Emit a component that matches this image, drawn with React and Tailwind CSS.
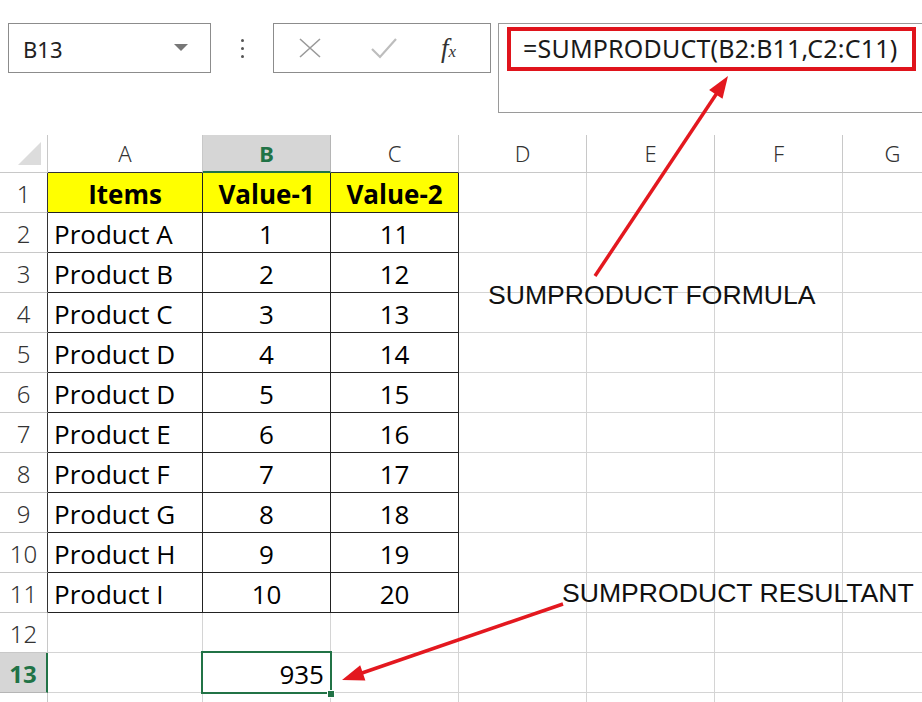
import React from "react";

const COLS = [
  { k: "A", w: 155 },
  { k: "B", w: 128 },
  { k: "C", w: 128 },
  { k: "D", w: 128 },
  { k: "E", w: 128 },
  { k: "F", w: 128 },
  { k: "G", w: 100 },
];

const ROWS = [
  ["Items", "Value-1", "Value-2"],
  ["Product A", "1", "11"],
  ["Product B", "2", "12"],
  ["Product C", "3", "13"],
  ["Product D", "4", "14"],
  ["Product D", "5", "15"],
  ["Product E", "6", "16"],
  ["Product F", "7", "17"],
  ["Product G", "8", "18"],
  ["Product H", "9", "19"],
  ["Product I", "10", "20"],
];

const cellFont = { fontFamily: "'Open Sans', Lato, sans-serif" };
const uiFont = { fontFamily: "'Noto Sans', 'Open Sans', sans-serif" };

function HeaderRow() {
  return (
    <div className="flex h-[38px]">
      <div className="w-[48px] shrink-0 border-r border-b border-[#c8c8c8] flex items-end justify-end pr-[6px] pb-[7px]">
        <svg width="23" height="23" viewBox="0 0 23 23">
          <polygon points="23,0 23,23 0,23" fill="#dcdcdc" />
        </svg>
      </div>
      {COLS.map((c, i) => {
        const sel = c.k === "B";
        const tableCol = i < 3;
        return (
          <div
            key={c.k}
            style={{ width: c.w, ...uiFont }}
            className={
              "shrink-0 border-r flex items-center justify-center text-[22px] font-light " +
              (sel
                ? "bg-[#d6d6d6] border-[#b5b5b5] border-b-2 border-b-[#217346] text-[#217346] !font-bold"
                : tableCol
                ? "border-[#c8c8c8] border-b border-b-[#333] text-[#333]"
                : "border-[#c8c8c8] border-b text-[#333]")
            }
          >
            {c.k}
          </div>
        );
      })}
    </div>
  );
}

function RowHead({ n, sel, dark }) {
  return (
    <div
      style={uiFont}
      className={
        "w-[48px] shrink-0 border-b flex items-center justify-center text-[24px] pt-[2px] " +
        (sel
          ? "bg-[#d6d6d6] border-[#b5b5b5] border-r-2 border-r-[#217346] text-[#217346] font-bold"
          : dark
          ? "border-[#c8c8c8] border-r border-r-[#333] text-[#333] font-light"
          : "border-[#c8c8c8] border-r text-[#333] font-light")
      }
    >
      {n}
    </div>
  );
}

function TableRow({ idx, data }) {
  const header = idx === 0;
  return (
    <div className="flex h-[40px]">
      <RowHead n={idx + 1} dark />
      {data.map((v, j) => (
        <div
          key={j}
          style={{ width: COLS[j].w, ...cellFont }}
          className={
            "shrink-0 border-r border-b border-[#222] flex items-center text-[26px] leading-none text-black pt-[2px] " +
            (j === 0 && !header ? "justify-start pl-[6px] " : "justify-center ") +
            (header ? "bg-[#ffff00] font-bold" : "")
          }
        >
          {v}
        </div>
      ))}
      {COLS.slice(3).map((c) => (
        <div
          key={c.k}
          style={{ width: c.w }}
          className="shrink-0 border-r border-b border-[#d4d4d4]"
        />
      ))}
    </div>
  );
}

function EmptyRow({ n, children, sel, h = "h-[40px]" }) {
  return (
    <div className={"flex " + h}>
      <RowHead n={n} sel={sel} />
      {COLS.map((c, i) =>
        children && i === 1 ? (
          <div
            key={c.k}
            style={{ width: c.w }}
            className="shrink-0 border-r border-b border-[#d4d4d4] relative"
          >
            {children}
          </div>
        ) : (
          <div
            key={c.k}
            style={{ width: c.w }}
            className="shrink-0 border-r border-b border-[#d4d4d4]"
          />
        )
      )}
    </div>
  );
}

export default function App() {
  return (
    <div className="relative w-[922px] h-[702px] bg-white overflow-hidden">
      {/* Top bar */}
      <div className="flex h-[135px] pt-[23px]">
        <div className="ml-[8px] w-[203px] h-[50px] border border-[#8c8c8c] flex items-center justify-between pl-[14px] pr-[22px]">
          <span style={uiFont} className="text-[22px] text-[#222] pt-[2px]">B13</span>
          <svg width="14" height="8" viewBox="0 0 14 8">
            <polygon points="0,0 14,0 7,7" fill="#777" />
          </svg>
        </div>
        <div className="w-[62px] h-[50px] flex flex-col items-center justify-center gap-[5px]">
          <div className="w-[3px] h-[3px] bg-[#555] rounded-full" />
          <div className="w-[3px] h-[3px] bg-[#555] rounded-full" />
          <div className="w-[3px] h-[3px] bg-[#555] rounded-full" />
        </div>
        <div className="w-[218px] h-[50px] border border-[#8c8c8c] flex items-center">
          <svg className="ml-[25px]" width="22" height="20" viewBox="0 0 22 20">
            <path d="M1 1 L21 19 M21 1 L1 19" stroke="#9a9a9a" strokeWidth="1.6" fill="none" />
          </svg>
          <svg className="ml-[50px]" width="26" height="22" viewBox="0 0 26 22">
            <path d="M1 12 L9 20 L25 2" stroke="#bdbdbd" strokeWidth="2.2" fill="none" />
          </svg>
          <span
            className="ml-[44px] italic text-[27px] text-[#333] leading-none"
            style={{ fontFamily: "'Liberation Serif', serif" }}
          >
            f<span className="text-[17px]">x</span>
          </span>
        </div>
        <div className="ml-[7px] flex-1 h-[90px] border border-r-0 border-[#9a9a9a] pl-[8px] pt-[3px]">
          <div className="w-[409px] h-[44px] border-[4px] border-[#e0141c] flex items-center pl-[12px]">
            <span style={uiFont} className="text-[25px] text-[#1a1a1a] tracking-[0.2px]">
              =SUMPRODUCT(B2:B11,C2:C11)
            </span>
          </div>
        </div>
      </div>

      {/* Grid */}
      <HeaderRow />
      {ROWS.map((r, i) => (
        <TableRow key={i} idx={i} data={r} />
      ))}
      <EmptyRow n={12} />
      <EmptyRow n={13} sel>
        <div className="absolute left-[-2px] top-[-2px] w-[131px] h-[43px] border-2 border-[#217346] flex items-center justify-end pr-[6px] pt-[3px]">
          <span style={cellFont} className="text-[26px] leading-none text-black">935</span>
        </div>
        <div className="absolute right-[-5px] bottom-[-6px] w-[8px] h-[8px] bg-[#217346] border border-white" />
      </EmptyRow>
      <EmptyRow n="" h="h-[20px]" />

      {/* Annotations */}
      <div
        className="absolute left-[488px] top-[282px] text-[26.6px] text-[#111] leading-none whitespace-nowrap"
        style={{ fontFamily: "'Liberation Sans', Arial, sans-serif" }}
      >
        SUMPRODUCT FORMULA
      </div>
      <div
        className="absolute left-[562px] top-[580px] text-[26.6px] text-[#111] leading-none whitespace-nowrap"
        style={{ fontFamily: "'Liberation Sans', Arial, sans-serif" }}
      >
        SUMPRODUCT RESULTANT
      </div>
      <svg className="absolute left-0 top-0 pointer-events-none" width="922" height="702">
        <line x1="595" y1="276" x2="717" y2="93" stroke="#e3181f" strokeWidth="3.5" />
        <polygon points="728,76 722.5,98.7 709.1,89.9" fill="#e3181f" />
        <line x1="563" y1="604" x2="362" y2="673" stroke="#e3181f" strokeWidth="3.5" />
        <polygon points="342,680 365.4,680.4 360.2,665.2" fill="#e3181f" />
      </svg>
    </div>
  );
}
